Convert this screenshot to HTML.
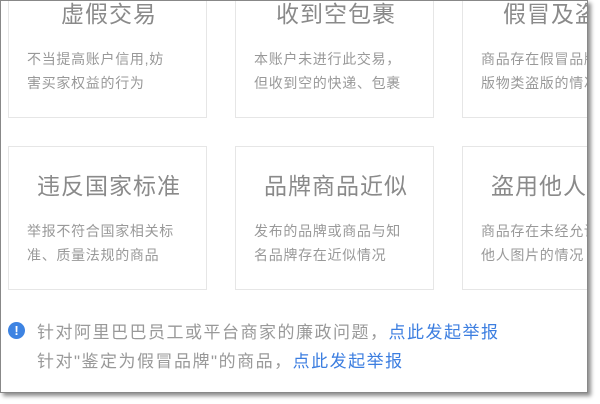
<!DOCTYPE html>
<html><head><meta charset="utf-8"><style>
html,body{margin:0;padding:0;background:#fff;width:600px;height:404px;overflow:hidden;font-family:"Liberation Sans","Noto Sans CJK SC",sans-serif}
.panel{position:absolute;left:0;top:0;width:588px;height:393px;background:#fff;border:1px solid #888;box-sizing:border-box;box-shadow:3px 3px 4px rgba(0,0,0,.45);overflow:hidden}
.card{position:absolute;width:199px;height:144px;border:1px solid #e6e6e6;box-sizing:border-box;background:#fff}
.t{position:absolute;top:25px;left:0;width:199px;text-align:center;font-size:23px;letter-spacing:1px;text-indent:1px;color:#8a8a8a;white-space:nowrap;line-height:28px}
.d{position:absolute;top:72px;left:18px;width:178px;font-size:14px;letter-spacing:0.7px;color:#999;line-height:24px;white-space:nowrap}
.ft{position:absolute;left:37px;font-size:17px;letter-spacing:1.5px;color:#999;white-space:nowrap;line-height:24px}
.ft a{color:#3c7ee0;text-decoration:none}
.ic{position:absolute;left:8px;top:322px;width:17px;height:17px;border-radius:50%;background:#3d83e2;color:#fff;font-weight:bold;font-size:13px;text-align:center;line-height:17px}
</style></head><body>
<div class="panel">
<div style="position:absolute;left:-1px;top:-1px">
<div class="card" style="left:8px;top:-26px"><div class="t">虚假交易</div><div class="d">不当提高账户信用,妨<br>害买家权益的行为</div></div>
<div class="card" style="left:235px;top:-26px"><div class="t">收到空包裹</div><div class="d">本账户未进行此交易，<br>但收到空的快递、包裹</div></div>
<div class="card" style="left:462px;top:-26px"><div class="t">假冒及盗版</div><div class="d">商品存在假冒品牌或出<br>版物类盗版的情况</div></div>
<div class="card" style="left:8px;top:146px"><div class="t">违反国家标准</div><div class="d">举报不符合国家相关标<br>准、质量法规的商品</div></div>
<div class="card" style="left:235px;top:146px"><div class="t">品牌商品近似</div><div class="d">发布的品牌或商品与知<br>名品牌存在近似情况</div></div>
<div class="card" style="left:462px;top:146px"><div class="t">盗用他人图片</div><div class="d">商品存在未经允许盗用<br>他人图片的情况</div></div>
<div class="ic">!</div>
<div class="ft" style="top:321px">针对阿里巴巴员工或平台商家的廉政问题，<a>点此发起举报</a></div>
<div class="ft" style="top:350px">针对"鉴定为假冒品牌"的商品，<a>点此发起举报</a></div>
</div>
</div>
</body></html>
